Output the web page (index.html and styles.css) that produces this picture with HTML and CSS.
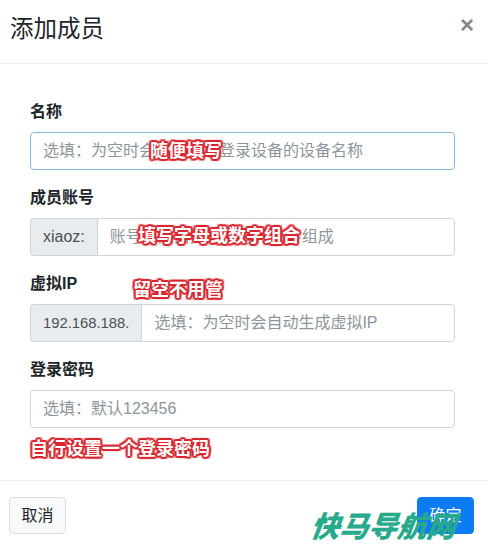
FILE: index.html
```html
<!DOCTYPE html>
<html lang="zh-CN">
<head>
    <meta charset="UTF-8">
    <title>添加成员</title>
    <link rel="stylesheet" href="styles.css">
</head>
<body>
    <div class="modal">
        <div class="modal-header">
            <h5 class="modal-title">添加成员</h5>
            <button class="close" type="button">&times;</button>
        </div>
        <div class="modal-body">
            <form>
                <div class="form-group">
                    <label>名称</label>
                    <input class="form-control focus" type="text" placeholder="选填：为空时会自动获取登录设备的设备名称">
                    <span class="mark mark-name">随便填写</span>
                </div>
                <div class="form-group">
                    <label>成员账号</label>
                    <div class="input-group">
                        <span class="input-group-text">xiaoz:</span>
                        <input class="form-control" type="text" placeholder="账号只能由英文字母和数字组成">
                    </div>
                    <span class="mark mark-account">填写字母或数字组合</span>
                </div>
                <div class="form-group">
                    <label>虚拟IP</label>
                    <div class="input-group">
                        <span class="input-group-text ip">192.168.188.</span>
                        <input class="form-control" type="text" placeholder="选填：为空时会自动生成虚拟IP">
                    </div>
                    <span class="mark mark-ip">留空不用管</span>
                </div>
                <div class="form-group">
                    <label>登录密码</label>
                    <input class="form-control" type="text" placeholder="选填：默认123456">
                    <span class="mark mark-pass">自行设置一个登录密码</span>
                </div>
            </form>
        </div>
        <div class="modal-footer">
            <button class="btn btn-light" type="button">取消</button>
            <button class="btn btn-primary" type="button">确定</button>
            <span class="watermark">快马导航网</span>
        </div>
    </div>
</body>
</html>
```

FILE: styles.css
```css
body {
    margin: 0;
    background-color: #fff;
    font-family: 'Liberation Sans', 'Noto Sans CJK SC', sans-serif;
    color: #212529;
}
.modal {
    width: 488px;
    height: 549px;
    display: flex;
    flex-direction: column;
    overflow: hidden;
}
.modal-header {
    display: flex;
    justify-content: space-between;
    align-items: flex-start;
    padding: 12px 14px 16px 10px;
    height: 35px;
    border-bottom: 1px solid #e9ecef;
}
.modal-title {
    margin: 0;
    font-size: 23.5px;
    font-weight: 400;
    line-height: 35px;
    color: #212529;
}
.close {
    border: none;
    background: none;
    padding: 0;
    margin-top: -1px;
    font-family: 'Liberation Sans', sans-serif;
    font-size: 24px;
    font-weight: 700;
    line-height: 28px;
    color: #888;
    cursor: pointer;
}
.modal-body {
    padding: 36px 33px 36px 30px;
}
form {
    margin: 0;
}
.form-group {
    position: relative;
    margin-bottom: 16px;
}
label {
    display: block;
    margin-bottom: 8px;
    font-size: 16px;
    font-weight: 700;
    line-height: 24px;
    color: #212529;
}
.form-control {
    display: block;
    box-sizing: border-box;
    width: 100%;
    height: 38px;
    margin: 0;
    padding: 6px 12px;
    font-family: inherit;
    font-size: 16px;
    line-height: 24px;
    color: #495057;
    background-color: #fff;
    border: 1px solid #ced4da;
    border-radius: 4px;
    outline: none;
}
.form-control::placeholder {
    color: #8e959b;
}
.form-control.focus {
    border-color: #88b8d8;
}
.input-group {
    display: flex;
}
.input-group .form-control {
    flex: 1;
    width: auto;
    min-width: 0;
    border-radius: 0 4px 4px 0;
}
.input-group-text {
    display: flex;
    align-items: center;
    box-sizing: border-box;
    height: 38px;
    padding: 6px 12px;
    font-size: 16px;
    color: #495057;
    background-color: #e9ecef;
    border: 1px solid #ced4da;
    border-right: none;
    border-radius: 4px 0 0 4px;
    white-space: nowrap;
}
.input-group-text.ip {
    font-size: 14.8px;
}
/* 红色标注文字 */
.mark {
    position: absolute;
    font-size: 18px;
    font-weight: 700;
    line-height: 18px;
    color: #fff;
    white-space: nowrap;
    text-shadow:
        1px 0 0 #d8262f, -1px 0 0 #d8262f, 0 1px 0 #d8262f, 0 -1px 0 #d8262f,
        2px 0 0 #d8262f, -2px 0 0 #d8262f, 0 2px 0 #d8262f, 0 -2px 0 #d8262f,
        1px 1px 0 #d8262f, -1px -1px 0 #d8262f, 1px -1px 0 #d8262f, -1px 1px 0 #d8262f,
        2px 2px 1px #e8747a, -2px -2px 1px #e8747a, 2px -2px 1px #e8747a, -2px 2px 1px #e8747a;
}
.mark-name {
    left: 120px;
    top: 42px;
}
.mark-account {
    left: 108px;
    top: 41px;
}
.mark-ip {
    left: 103px;
    top: 9px;
}
.mark-pass {
    left: 0;
    top: 82px;
}
.modal-footer {
    position: relative;
    display: flex;
    justify-content: space-between;
    align-items: flex-start;
    padding: 16px 14px 15px 9px;
    border-top: 1px solid #e9ecef;
}
.btn {
    box-sizing: border-box;
    width: 57px;
    height: 37px;
    padding: 0;
    font-family: inherit;
    font-size: 16px;
    line-height: 33px;
    border-radius: 4px;
    cursor: pointer;
}
.btn-light {
    color: #212529;
    background-color: #f8f9fa;
    border: 1px solid #dcdfe2;
}
.btn-primary {
    color: #fff;
    background-color: #0d7cf2;
    border: 1px solid #0d7cf2;
}
.watermark {
    position: absolute;
    left: 311px;
    top: 30px;
    font-size: 29px;
    font-weight: 900;
    font-style: italic;
    line-height: 32px;
    color: #27a98b;
    transform: skewX(-8deg);
}
```
